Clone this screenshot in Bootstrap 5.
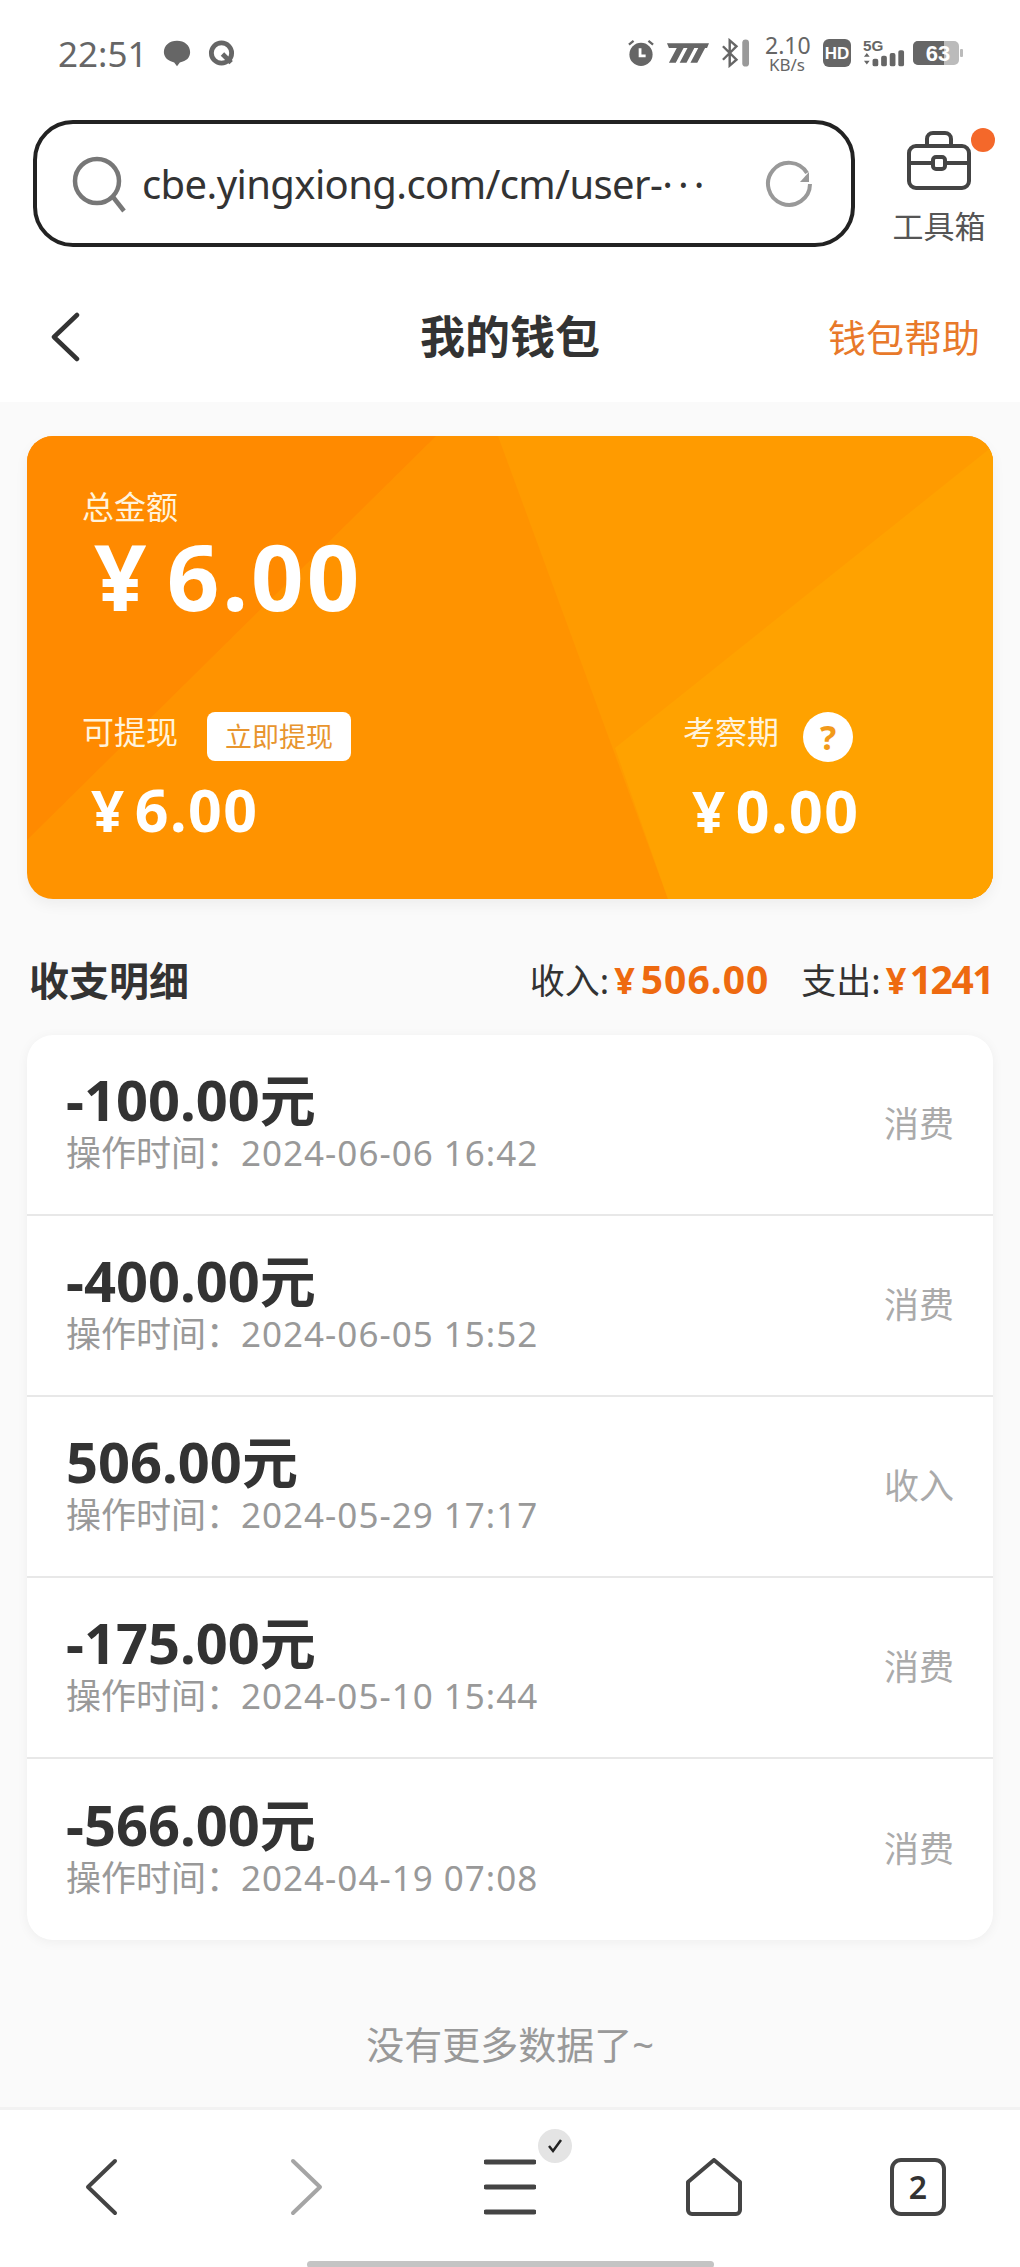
<!DOCTYPE html>
<html lang="zh-CN">
<head>
  <meta charset="UTF-8" />
  <meta name="viewport" content="width=device-width, initial-scale=1.0" />
  <title>我的钱包</title>
  <link href="https://cdn.jsdelivr.net/npm/bootstrap@5.3.3/dist/css/bootstrap.min.css" rel="stylesheet" />
  <style>
    body {
      width: 1020px;
      height: 2267px;
      overflow: hidden;
      background-color: #fff;
      color: #333;
      font-family: "Noto Sans", "Noto Sans CJK SC", sans-serif;
    }
    .status-row { height: 106px; padding: 0 57px 0 58px; color: #666; }
    .status-time { font-size: 35px; line-height: 1; margin-right: 15px; }
    .st-gap { margin-left: 12px; }
    .net-speed { width: 44px; line-height: 1; text-align: center; margin: 0 14px 0 15px; white-space: nowrap; }
    .net-speed .num { font-size: 23px; line-height: 22px; }
    .net-speed .unit { font-size: 17px; line-height: 17px; }
    .browser-row { height: 152px; padding: 14px 30px 0 33px; }
    .url-box {
      width: 822px;
      height: 127px;
      border: 4px solid #222;
      border-radius: 40px;
      padding: 0 38px 0 34px;
    }
    .url-text { font-size: 40px; letter-spacing: -.6px; color: #333; margin-left: 13px; }
    .url-dots { letter-spacing: 5px; }
    .tool-btn { width: 100px; margin-left: 34px; margin-top: 10px; }
    .tool-label { font-size: 31px; line-height: 1; color: #555; margin-top: 21px; white-space: nowrap; }
    .tool-dot { position: absolute; top: -2px; right: -6px; width: 24px; height: 24px; border-radius: 50%; background: #f4682a; }
    .title-row { height: 130px; margin-top: 14px; padding: 0 40px 0 50px; }
    .title-row > .side { width: 150px; }
    .title-row > .side-end { width: 160px; }
    .page-title { font-size: 45px; font-weight: 700; color: #333; }
    .help-link { font-size: 38px; color: #e8792a; white-space: nowrap; }
    .wallet-body { height: 1705px; background: #fafafa; padding: 34px 27px 0; }
    .balance-box {
      position: relative;
      height: 463px;
      border-radius: 26px;
      overflow: hidden;
      background: #ff9300;
      color: #fff;
      box-shadow: 0 6px 14px rgba(0, 0, 0, .05);
    }
    .balance-bg { position: absolute; inset: 0; width: 100%; height: 100%; }
    .balance-inner { position: relative; height: 100%; padding: 52px 0 0 55px; }
    .balance-label { font-size: 32px; line-height: 38px; color: #fff3dc; }
    .balance-main { font-size: 92px; font-weight: 700; line-height: 100px; margin: 0 0 0 12px; letter-spacing: 3px; }
    .balance-main .yen { margin-right: 17px; }
    .balance-sub { font-size: 59px; font-weight: 700; line-height: 62px; margin: 17px 0 0 9px; letter-spacing: 1.5px; }
    .balance-sub .yen { font-size: 58px; margin-right: 9px; }
    .withdraw-tag {
      background: #fff;
      color: #e8952e;
      font-size: 27px;
      line-height: 49px;
      height: 49px;
      padding: 0 18px;
      border-radius: 8px;
      margin-left: 29px;
      border: 0;
    }
    .help-dot {
      width: 50px;
      height: 50px;
      border-radius: 50%;
      background: #fff;
      color: #f29a1a;
      font-size: 34px;
      font-weight: 700;
      line-height: 50px;
      text-align: center;
      margin-left: 24px;
    }
    .balance-low { margin-top: 86px; }
    .balance-low .balance-label { margin-bottom: 10px; }
    .balance-right { width: 310px; }
    .detail-head { height: 136px; padding: 0 0 24px 2px; }
    .detail-title { font-size: 40px; font-weight: 700; color: #333; line-height: 60px; }
    .detail-sum { font-size: 35px; color: #333; line-height: 60px; white-space: nowrap; }
    .detail-sum b { font-size: 39px; color: #ee6a10; font-weight: 700; letter-spacing: 1px; margin-left: 5px; }
    .detail-sum b .yen { font-size: 36px; margin-right: 5px; }
    .detail-sum b.sum-tight { letter-spacing: -1.5px; }
    .sum-gap { margin-left: 32px; }
    .record-box {
      border: 0;
      border-radius: 26px;
      overflow: hidden;
      box-shadow: 0 2px 12px rgba(0, 0, 0, .05);
      --bs-list-group-border-width: 0;
    }
    .record-item {
      height: 181px;
      padding: 0 39px 6px;
      border: 0;
      border-bottom: 2px solid #e8e8e8;
      box-sizing: border-box;
    }
    .record-item:last-child { border-bottom: 0; }
    .record-money { font-size: 56px; font-weight: 700; line-height: 58px; color: #333; }
    .record-time { font-size: 35px; line-height: 42px; color: #999; margin-top: 4px; }
    .record-time span { letter-spacing: 1px; }
    .record-type { font-size: 35px; color: #aaa; margin-top: 6px; }
    .no-more { font-size: 38px; line-height: 1; color: #999; margin-top: 85px; }
    .bottom-bar { height: 160px; border-top: 3px solid #f2f2f2; background: #fff; }
    .bar-slot { flex: 1 1 0; height: 154px; }
    .menu-check {
      position: absolute;
      top: -30px;
      left: 54px;
      width: 34px;
      height: 34px;
      border-radius: 50%;
      background: #e4e4e4;
    }
    .home-line { width: 407px; height: 7px; border-radius: 4px; background: #c4c4c4; margin: -6px auto 0; }
  </style>
</head>
<body>
  <!-- status bar -->
  <div class="status-row d-flex align-items-center">
    <span class="status-time">22:51</span>
    <svg width="30" height="30" viewBox="0 0 32 30" class="me-3"><path d="M16 2C8 2 2 7 2 14c0 6 5 10 11 11l3 4 3-4c7-1 11-5 11-11 0-7-6-12-14-12z" fill="#666"/></svg>
    <svg width="27" height="28" viewBox="0 0 28 28"><circle cx="14" cy="14" r="10.5" fill="none" stroke="#666" stroke-width="5"/><path d="M15 15l9 9" stroke="#666" stroke-width="5"/></svg>
    <div class="ms-auto d-flex align-items-center">
      <svg width="26" height="30" viewBox="0 0 28 30"><circle cx="14" cy="16.500" r="12.500" fill="#666"/><path d="M13 10v8h6" fill="none" stroke="#fff" stroke-width="3"/><path d="M1 6l5-4M27 6l-5-4" stroke="#666" stroke-width="2.500"/></svg>
      <svg width="43" height="22" viewBox="0 0 44 22" class="st-gap"><path d="M1 1h43l-2 5h-2l-8 15h-7l8-15h-4l-8 15h-7l8-15h-4L10 21H3L11 6H3z" fill="#666"/></svg>
      <svg width="29" height="30" viewBox="0 0 30 30" class="st-gap"><path d="M2 8l14 14-7 6V2l7 6L2 22" fill="none" stroke="#666" stroke-width="2.500"/><rect x="22" y="1" width="7" height="28" rx="3.500" fill="#999"/></svg>
      <div class="net-speed"><div class="num">2.10</div><div class="unit">KB/s</div></div>
      <svg width="28" height="28" viewBox="0 0 28 28"><rect width="28" height="28" rx="6" fill="#666"/><text x="14" y="20" text-anchor="middle" font-family="Liberation Sans" font-size="17" font-weight="700" fill="#fff">HD</text></svg>
      <svg width="42" height="30" viewBox="0 0 44 30" class="st-gap"><text x="0" y="13" font-family="Liberation Sans" font-size="16" font-weight="700" fill="#666">5G</text><path d="M4 15l3 4H1zM4 27l3-4H1z" fill="#666"/><rect x="10" y="21" width="6" height="8" rx="2" fill="#666"/><rect x="19" y="18" width="6" height="11" rx="2" fill="#666"/><rect x="28" y="15" width="6" height="14" rx="2" fill="#666"/><rect x="37" y="12" width="6" height="17" rx="2" fill="#666"/></svg>
      <svg width="50" height="24" viewBox="0 0 50 24" class="ms-2"><rect width="46" height="24" rx="5" fill="#bbb"/><path d="M5 0h26v24H5a5 5 0 0 1-5-5V5a5 5 0 0 1 5-5z" fill="#666"/><rect x="47" y="8" width="3" height="8" rx="1" fill="#bbb"/><text x="25" y="20" text-anchor="middle" font-family="Liberation Sans" font-size="22" font-weight="700" fill="#fff">63</text></svg>
    </div>
  </div>

  <!-- browser address bar -->
  <div class="browser-row d-flex align-items-start">
    <div class="url-box d-flex align-items-center">
      <svg width="58" height="58" viewBox="0 0 58 58" class="flex-shrink-0"><circle cx="26" cy="26" r="22" fill="none" stroke="#777" stroke-width="4.500"/><path d="M42 42l11 14" stroke="#777" stroke-width="4.500"/></svg>
      <span class="url-text flex-grow-1 text-nowrap">cbe.yingxiong.com/cm/user-<span class="url-dots">···</span></span>
      <svg width="48" height="48" viewBox="0 0 48 48" class="flex-shrink-0"><path d="M42 13A21 21 0 1 0 45 24" fill="none" stroke="#999" stroke-width="4"/><path d="M44 12v10h-9z" fill="#999"/></svg>
    </div>
    <div class="tool-btn text-center position-relative">
      <svg width="64" height="60" viewBox="0 0 64 60" class="d-block mx-auto"><rect x="2" y="16" width="60" height="42" rx="7" fill="none" stroke="#444" stroke-width="4"/><path d="M20 16V9a6 6 0 0 1 6-6h12a6 6 0 0 1 6 6v7M2 33h24M38 33h24" fill="none" stroke="#444" stroke-width="4"/><rect x="26" y="27" width="12" height="12" rx="3" fill="none" stroke="#444" stroke-width="4"/></svg>
      <span class="tool-dot"></span>
      <div class="tool-label">工具箱</div>
    </div>
  </div>

  <!-- page title -->
  <div class="title-row d-flex align-items-center justify-content-between">
    <div class="side">
      <svg width="30" height="50" viewBox="0 0 30 50" class="d-block"><path d="M27 3L4 25l23 22" fill="none" stroke="#333" stroke-width="4.500" stroke-linecap="round" stroke-linejoin="round"/></svg>
    </div>
    <div class="page-title">我的钱包</div>
    <div class="side-end text-end help-link">钱包帮助</div>
  </div>

  <div class="wallet-body">
    <!-- balance -->
    <div class="balance-box">
      <svg class="balance-bg" viewBox="0 0 966 463" preserveAspectRatio="none">
        <polygon points="0,0 409,0 0,404" fill="#ff8a00"/>
        <polygon points="471,0 966,0 966,463 641,463" fill="#ff9b00"/>
        <polygon points="966,10 966,463 641,463 588,312" fill="#ffa200"/>
      </svg>
      <div class="balance-inner">
        <div class="balance-label">总金额</div>
        <div class="balance-main"><span class="yen">¥</span>6.00</div>
        <div class="balance-low d-flex justify-content-between">
          <div>
            <div class="d-flex align-items-center">
              <span class="balance-label">可提现</span>
              <button type="button" class="btn withdraw-tag">立即提现</button>
            </div>
            <div class="balance-sub"><span class="yen">¥</span>6.00</div>
          </div>
          <div class="balance-right">
            <div class="d-flex align-items-center">
              <span class="balance-label">考察期</span>
              <span class="help-dot">?</span>
            </div>
            <div class="balance-sub"><span class="yen">¥</span>0.00</div>
          </div>
        </div>
      </div>
    </div>

    <!-- details -->
    <div class="detail-head d-flex align-items-end justify-content-between">
      <div class="detail-title">收支明细</div>
      <div class="detail-sum">收入:<b><span class="yen">¥</span>506.00</b><span class="sum-gap">支出:</span><b class="sum-tight"><span class="yen">¥</span>1241</b></div>
    </div>

    <div class="list-group record-box">
      <div class="list-group-item record-item d-flex align-items-center justify-content-between">
        <div><div class="record-money">-100.00元</div><div class="record-time">操作时间：<span>2024-06-06 16:42</span></div></div>
        <span class="record-type">消费</span>
      </div>
      <div class="list-group-item record-item d-flex align-items-center justify-content-between">
        <div><div class="record-money">-400.00元</div><div class="record-time">操作时间：<span>2024-06-05 15:52</span></div></div>
        <span class="record-type">消费</span>
      </div>
      <div class="list-group-item record-item d-flex align-items-center justify-content-between">
        <div><div class="record-money">506.00元</div><div class="record-time">操作时间：<span>2024-05-29 17:17</span></div></div>
        <span class="record-type">收入</span>
      </div>
      <div class="list-group-item record-item d-flex align-items-center justify-content-between">
        <div><div class="record-money">-175.00元</div><div class="record-time">操作时间：<span>2024-05-10 15:44</span></div></div>
        <span class="record-type">消费</span>
      </div>
      <div class="list-group-item record-item d-flex align-items-center justify-content-between">
        <div><div class="record-money">-566.00元</div><div class="record-time">操作时间：<span>2024-04-19 07:08</span></div></div>
        <span class="record-type">消费</span>
      </div>
    </div>

    <div class="no-more text-center">没有更多数据了~</div>
  </div>

  <!-- browser bottom bar -->
  <div class="bottom-bar d-flex">
    <div class="bar-slot d-flex align-items-center justify-content-center">
      <svg width="34" height="58" viewBox="0 0 34 58"><path d="M30 3L3 29l27 26" fill="none" stroke="#444" stroke-width="4" stroke-linecap="round" stroke-linejoin="round"/></svg>
    </div>
    <div class="bar-slot d-flex align-items-center justify-content-center">
      <svg width="34" height="58" viewBox="0 0 34 58"><path d="M4 3l27 26L4 55" fill="none" stroke="#a5a5a5" stroke-width="4" stroke-linecap="round" stroke-linejoin="round"/></svg>
    </div>
    <div class="bar-slot d-flex align-items-center justify-content-center">
      <div class="position-relative">
        <svg width="52" height="56" viewBox="0 0 52 56" class="d-block"><path d="M2 3h48M2 28h48M2 53h48" stroke="#444" stroke-width="5" stroke-linecap="round"/></svg>
        <span class="menu-check d-flex align-items-center justify-content-center">
          <svg width="18" height="16" viewBox="0 0 18 16"><path d="M3 8l4 5 8-11" fill="none" stroke="#222" stroke-width="2.500"/></svg>
        </span>
      </div>
    </div>
    <div class="bar-slot d-flex align-items-center justify-content-center">
      <svg width="56" height="58" viewBox="0 0 56 58"><path d="M28 2L2 24v28a4 4 0 0 0 4 4h44a4 4 0 0 0 4-4V24z" fill="none" stroke="#444" stroke-width="4" stroke-linejoin="round"/></svg>
    </div>
    <div class="bar-slot d-flex align-items-center justify-content-center">
      <svg width="56" height="58" viewBox="0 0 56 58"><rect x="2" y="2" width="52" height="54" rx="9" fill="none" stroke="#444" stroke-width="4"/><text x="28" y="41" text-anchor="middle" font-family="Noto Sans" font-size="32" font-weight="600" fill="#333">2</text></svg>
    </div>
  </div>
  <div class="home-line"></div>

  <script src="https://cdn.jsdelivr.net/npm/bootstrap@5.3.3/dist/js/bootstrap.bundle.min.js"></script>
</body>
</html>
